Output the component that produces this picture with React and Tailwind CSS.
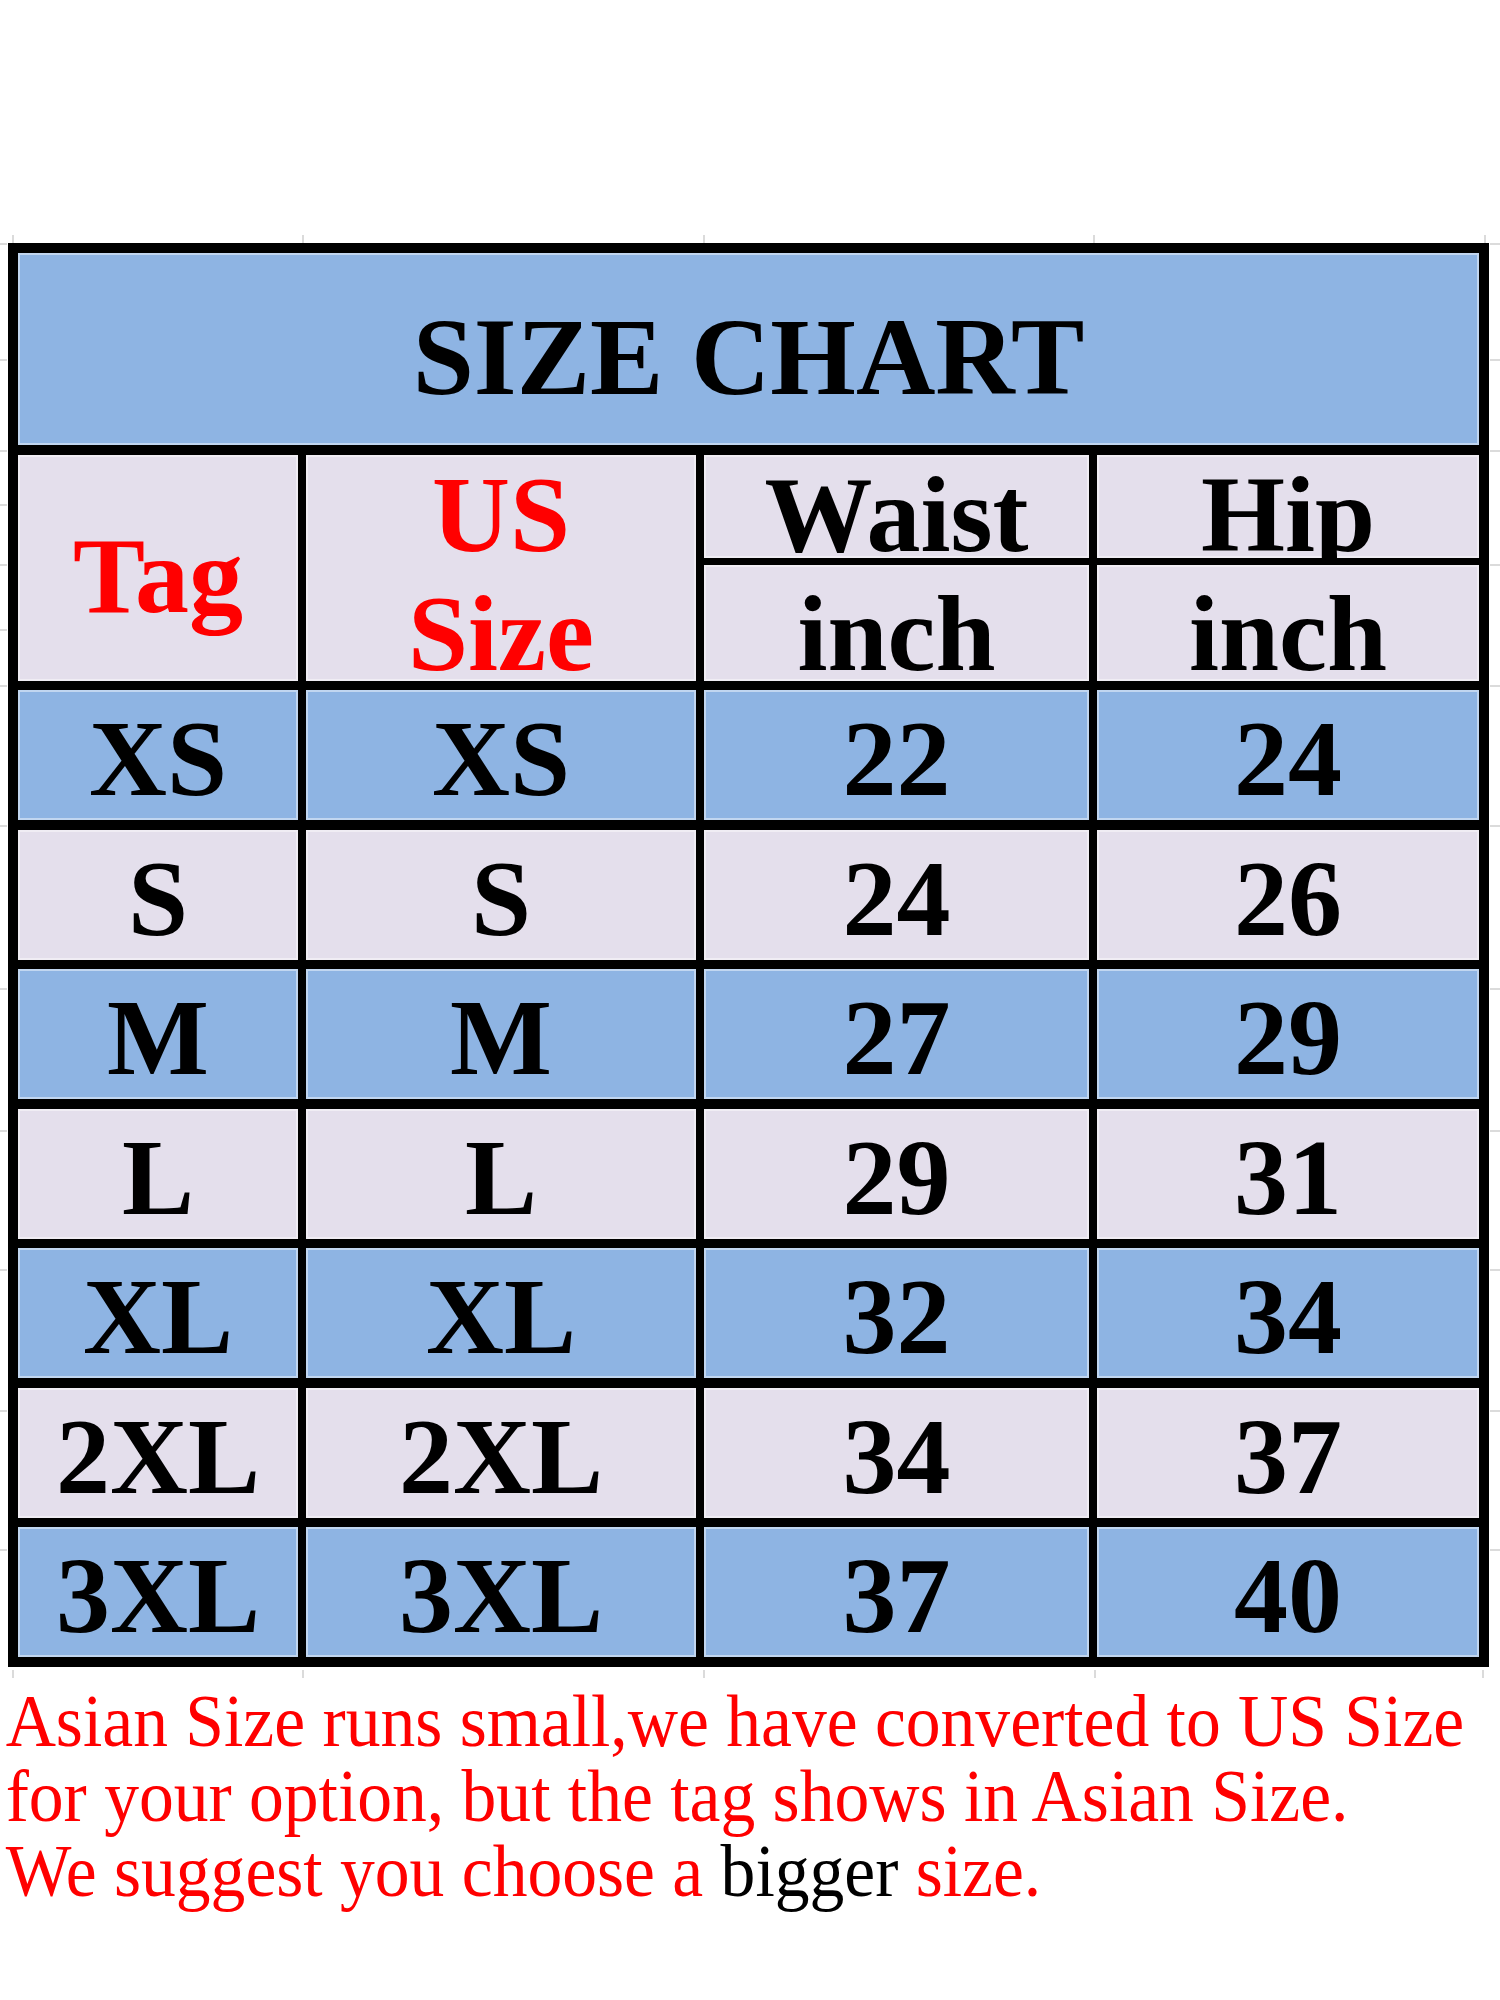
import React from "react";

const rows = [
  ["XS", "XS", "22", "24"],
  ["S", "S", "24", "26"],
  ["M", "M", "27", "29"],
  ["L", "L", "29", "31"],
  ["XL", "XL", "32", "34"],
  ["2XL", "2XL", "34", "37"],
  ["3XL", "3XL", "37", "40"],
];

const edge = "shadow-[inset_0_0_0_2px_rgba(255,255,255,0.45)]";

function Ticks() {
  const topX = [13, 303, 704, 1094, 1485];
  const botX = [13, 303, 704, 1095, 1483];
  const leftY = [9, 125, 216, 270, 330, 395, 451, 591, 754, 896, 1035, 1176, 1315];
  const rightY = [9, 125, 216, 330, 451, 591, 754, 896, 1035, 1176, 1315];
  return (
    <svg
      className="absolute left-0 top-0"
      width="1500"
      height="1445"
      viewBox="0 0 1500 1445"
    >
      <g stroke="#cfcfcf" strokeWidth="1.5">
        {topX.map((x) => (
          <line key={"t" + x} x1={x} y1="0" x2={x} y2="8" />
        ))}
        {botX.map((x) => (
          <line key={"b" + x} x1={x} y1="1435" x2={x} y2="1443" />
        ))}
        {leftY.map((y) => (
          <line key={"l" + y} x1="0" y1={y} x2="7" y2={y} />
        ))}
        {rightY.map((y) => (
          <line key={"r" + y} x1="1490" y1={y} x2="1500" y2={y} />
        ))}
      </g>
    </svg>
  );
}

export default function App() {
  return (
    <div className="w-[1500px] h-[2000px] bg-white overflow-hidden font-['Liberation_Serif','Times_New_Roman',serif]">
      <div className="relative mt-[235px] pt-[8px] pl-[8px] pb-[13px]">
        <Ticks />
        <div className="relative w-[1481px] bg-black p-[10px] flex flex-col">
          {/* Title */}
          <div
            className={`h-[192px] bg-[#8eb4e3] ${edge} flex items-start justify-center pt-[49px]`}
          >
            <span className="text-[110px] leading-[110px] font-bold text-black">
              SIZE CHART
            </span>
          </div>

          {/* Header row */}
          <div className="mt-[10px] h-[226px] flex gap-[8px] text-[108px] font-bold">
            <div
              className={`w-[280px] bg-[#e4dfec] ${edge} flex justify-center pt-[67px] leading-[108px] text-[#ff0000]`}
            >
              Tag
            </div>
            <div
              className={`w-[390px] bg-[#e4dfec] ${edge} flex flex-col items-center leading-[119px] text-[#ff0000]`}
            >
              <span>US</span>
              <span>Size</span>
            </div>
            <div className="w-[385px] flex flex-col gap-[7px] text-black">
              <div
                className={`h-[103px] bg-[#e4dfec] ${edge} flex justify-center pt-[20px] leading-[80px]`}
              >
                Waist
              </div>
              <div
                className={`flex-1 bg-[#e4dfec] ${edge} flex justify-center pt-[24px] leading-[90px]`}
              >
                inch
              </div>
            </div>
            <div className="w-[382px] flex flex-col gap-[7px] text-black">
              <div
                className={`h-[103px] overflow-hidden bg-[#e4dfec] ${edge} flex justify-center pt-[20px] leading-[80px]`}
              >
                Hip
              </div>
              <div
                className={`flex-1 bg-[#e4dfec] ${edge} flex justify-center pt-[24px] leading-[90px]`}
              >
                inch
              </div>
            </div>
          </div>

          {/* Data rows */}
          <div className="mt-[9px] flex flex-col gap-[9.5px] text-[108px] font-bold text-black leading-[108px]">
            {rows.map((r, i) => {
              const bg = i % 2 === 0 ? "bg-[#8eb4e3]" : "bg-[#e4dfec]";
              return (
                <div key={r[0]} className="h-[130px] flex gap-[8px]">
                  <div className={`w-[280px] ${bg} ${edge} flex justify-center pt-[15px]`}>
                    {r[0]}
                  </div>
                  <div className={`w-[390px] ${bg} ${edge} flex justify-center pt-[15px]`}>
                    {r[1]}
                  </div>
                  <div className={`w-[385px] ${bg} ${edge} flex justify-center pt-[15px]`}>
                    {r[2]}
                  </div>
                  <div className={`w-[382px] ${bg} ${edge} flex justify-center pt-[15px]`}>
                    {r[3]}
                  </div>
                </div>
              );
            })}
          </div>
        </div>
      </div>

      {/* Footer note */}
      <div className="mt-[4px] pl-[6px] text-[74px] leading-[75px] text-[#ff0000] whitespace-nowrap origin-left scale-x-[0.94]">
        <div>Asian Size runs small,we have converted to US Size</div>
        <div>for your option, but the tag shows in Asian Size.</div>
        <div>
          We suggest you choose a <span className="text-black">bigger</span> size.
        </div>
      </div>
    </div>
  );
}
